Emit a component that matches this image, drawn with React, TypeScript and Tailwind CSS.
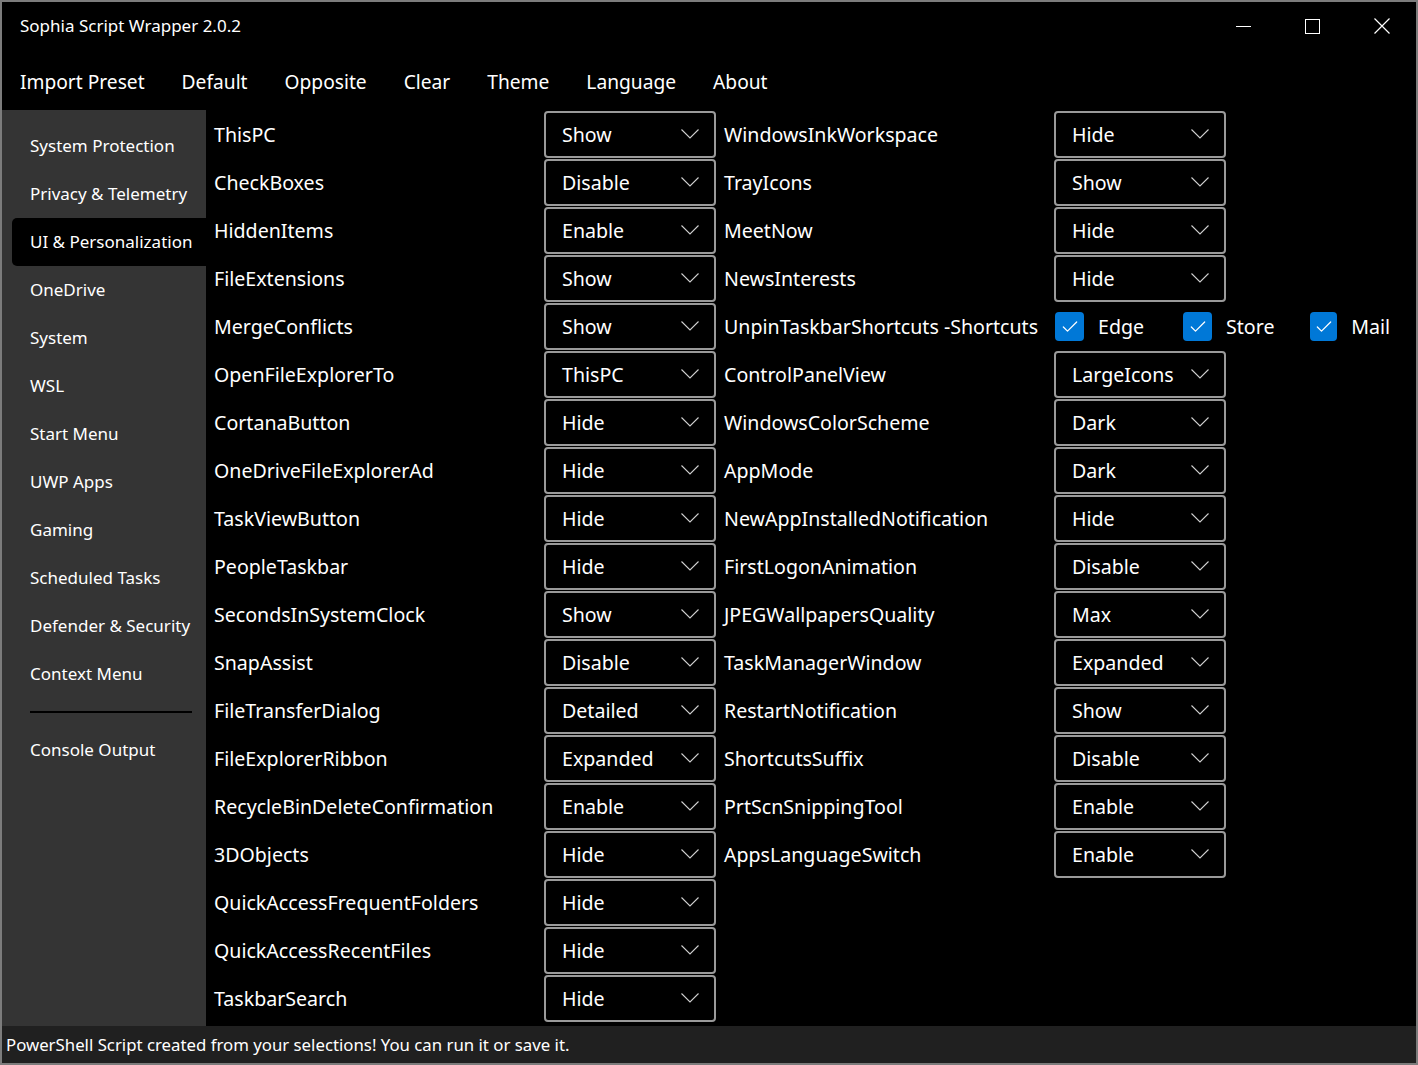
import { Check } from "lucide-react";

const sideItems = [
  "System Protection",
  "Privacy & Telemetry",
  "UI & Personalization",
  "OneDrive",
  "System",
  "WSL",
  "Start Menu",
  "UWP Apps",
  "Gaming",
  "Scheduled Tasks",
  "Defender & Security",
  "Context Menu",
];

const leftRows: [string, string][] = [
  ["ThisPC", "Show"],
  ["CheckBoxes", "Disable"],
  ["HiddenItems", "Enable"],
  ["FileExtensions", "Show"],
  ["MergeConflicts", "Show"],
  ["OpenFileExplorerTo", "ThisPC"],
  ["CortanaButton", "Hide"],
  ["OneDriveFileExplorerAd", "Hide"],
  ["TaskViewButton", "Hide"],
  ["PeopleTaskbar", "Hide"],
  ["SecondsInSystemClock", "Show"],
  ["SnapAssist", "Disable"],
  ["FileTransferDialog", "Detailed"],
  ["FileExplorerRibbon", "Expanded"],
  ["RecycleBinDeleteConfirmation", "Enable"],
  ["3DObjects", "Hide"],
  ["QuickAccessFrequentFolders", "Hide"],
  ["QuickAccessRecentFiles", "Hide"],
  ["TaskbarSearch", "Hide"],
];

const rightRows: [string, string | null][] = [
  ["WindowsInkWorkspace", "Hide"],
  ["TrayIcons", "Show"],
  ["MeetNow", "Hide"],
  ["NewsInterests", "Hide"],
  ["UnpinTaskbarShortcuts -Shortcuts", null],
  ["ControlPanelView", "LargeIcons"],
  ["WindowsColorScheme", "Dark"],
  ["AppMode", "Dark"],
  ["NewAppInstalledNotification", "Hide"],
  ["FirstLogonAnimation", "Disable"],
  ["JPEGWallpapersQuality", "Max"],
  ["TaskManagerWindow", "Expanded"],
  ["RestartNotification", "Show"],
  ["ShortcutsSuffix", "Disable"],
  ["PrtScnSnippingTool", "Enable"],
  ["AppsLanguageSwitch", "Enable"],
];

function Combo({ value }: { value: string }) {
  return (
    <div className="w-[172px] h-[47px] my-[0.5px] border-2 border-[#9a9a9a] rounded-[4px] flex items-center justify-between pl-[16px] pr-[15px]">
      <span className="text-[19.6px] pt-[2px]">{value}</span>
      <svg width="18" height="10" viewBox="0 0 18 10" className="text-[#d0d0d0]">
        <polyline points="0.5,0.5 9,9 17.5,0.5" fill="none" stroke="currentColor" strokeWidth="1.1" />
      </svg>
    </div>
  );
}

function CheckItem({ label, width }: { label: string; width: string }) {
  return (
    <div className={`flex items-center gap-[14px] ${width}`}>
      <div className="w-[29px] h-[29px] rounded-[4px] bg-[#0078d7] flex items-center justify-center">
        <Check className="w-[20px] h-[20px] text-white" strokeWidth={1.5} />
      </div>
      <span className="text-[19.6px]">{label}</span>
    </div>
  );
}

export default function App() {
  return (
    <div className="w-[1418px] h-[1065px] border-2 border-[#7c7c7c] bg-black text-white flex flex-col font-['Noto_Sans',sans-serif] overflow-hidden">
      {/* title bar */}
      <div className="h-[48px] flex items-center shrink-0">
        <span className="pl-[18px] text-[17px] flex-1">Sophia Script Wrapper 2.0.2</span>
        <div className="flex h-full">
          <div className="w-[69px] flex items-center justify-center">
            <div className="w-[15px] h-[1px] bg-white" />
          </div>
          <div className="w-[69px] flex items-center justify-center">
            <div className="w-[15px] h-[15px] border border-white" />
          </div>
          <div className="w-[69px] flex items-center justify-center">
            <svg width="16" height="16" viewBox="0 0 16 16">
              <path d="M0.5 0.5 L15.5 15.5 M15.5 0.5 L0.5 15.5" stroke="white" strokeWidth="1.2" />
            </svg>
          </div>
        </div>
      </div>

      {/* menu bar */}
      <div className="h-[60px] flex items-center gap-[37px] pl-[18px] pt-[4px] text-[19.2px] shrink-0">
        <span>Import Preset</span>
        <span>Default</span>
        <span>Opposite</span>
        <span>Clear</span>
        <span>Theme</span>
        <span>Language</span>
        <span>About</span>
      </div>

      <div className="flex flex-1 min-h-0">
        {/* sidebar */}
        <div className="w-[204px] bg-[#343434] pt-[12px] pl-[10px] shrink-0 text-[17px]">
          {sideItems.map((item) => (
            <div
              key={item}
              className={`h-[48px] flex items-center pl-[18px] ${
                item === "UI & Personalization" ? "bg-black rounded-l-[5px]" : ""
              }`}
            >
              {item}
            </div>
          ))}
          <div className="h-[28px] flex items-center pl-[18px] pr-[14px]">
            <div className="h-[2px] w-full bg-black" />
          </div>
          <div className="h-[48px] flex items-center pl-[18px]">Console Output</div>
        </div>

        {/* main */}
        <div className="flex-1 flex pl-[8px] gap-[8px] text-[19.6px]">
          <div className="flex flex-col">
            {leftRows.map(([label, value]) => (
              <div key={label} className="h-[48px] flex items-center">
                <span className="w-[330px] pt-[2px]">{label}</span>
                <Combo value={value} />
              </div>
            ))}
          </div>
          <div className="flex flex-col">
            {rightRows.map(([label, value]) => (
              <div key={label} className="h-[48px] flex items-center">
                <span className="w-[330px] whitespace-nowrap pt-[2px]">{label}</span>
                {value ? (
                  <Combo value={value} />
                ) : (
                  <div className="flex items-center pl-[1px] pt-[2px]">
                    <CheckItem label="Edge" width="w-[128px]" />
                    <CheckItem label="Store" width="w-[127px]" />
                    <CheckItem label="Mail" width="w-[80px]" />
                  </div>
                )}
              </div>
            ))}
          </div>
        </div>
      </div>

      {/* status bar */}
      <div className="h-[37px] bg-[#202020] flex items-center pl-[4px] text-[16.8px] shrink-0">
        PowerShell Script created from your selections! You can run it or save it.
      </div>
    </div>
  );
}
